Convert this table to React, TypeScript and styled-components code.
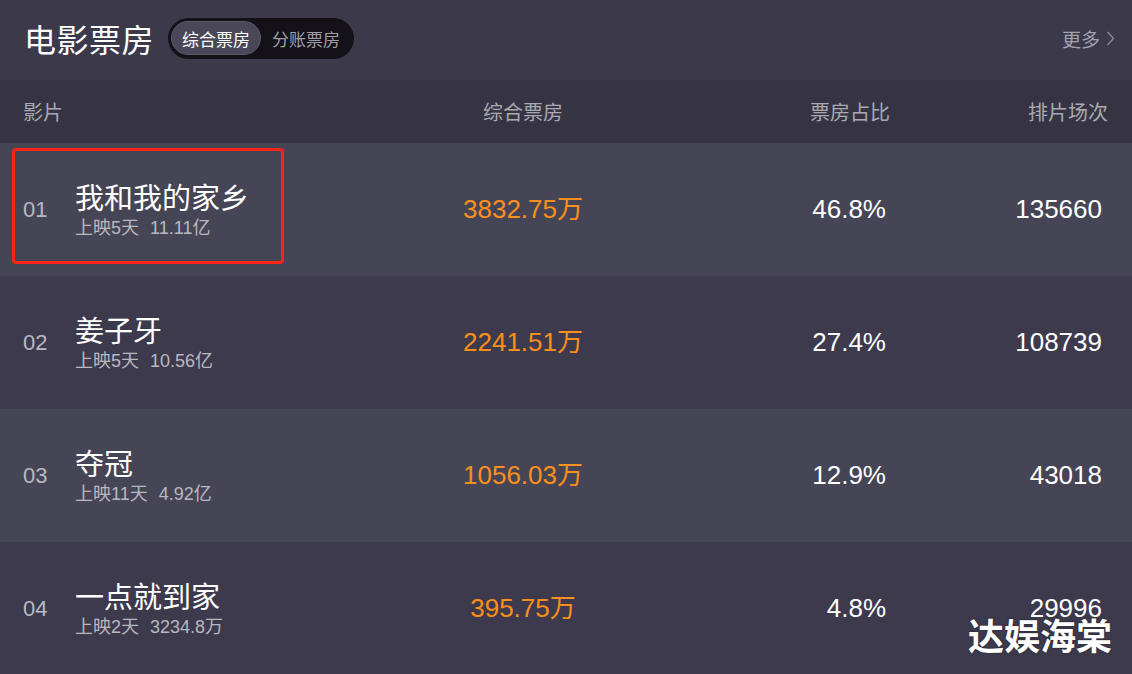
import * as React from 'react';
import styled, { createGlobalStyle } from 'styled-components';

const GlobalStyle = createGlobalStyle`
  html, body {
    margin: 0;
    padding: 0;
    background: #3d3a4d;
  }
  body {
    font-family: "Liberation Sans", "Noto Sans CJK SC", sans-serif;
    overflow: hidden;
  }
`;

interface Movie {
  rank: string,
  name: string,
  days: string,
  total: string,
  boxOffice: string,
  share: string,
  shows: string,
}

const movies: Movie[] = [
  { rank: '01', name: '我和我的家乡', days: '上映5天', total: '11.11亿', boxOffice: '3832.75万', share: '46.8%', shows: '135660' },
  { rank: '02', name: '姜子牙', days: '上映5天', total: '10.56亿', boxOffice: '2241.51万', share: '27.4%', shows: '108739' },
  { rank: '03', name: '夺冠', days: '上映11天', total: '4.92亿', boxOffice: '1056.03万', share: '12.9%', shows: '43018' },
  { rank: '04', name: '一点就到家', days: '上映2天', total: '3234.8万', boxOffice: '395.75万', share: '4.8%', shows: '29996' },
];

const Page = styled.div`
  position: relative;
  width: 1132px;
  height: 674px;
  overflow: hidden;
  background: #3d3a4d;
`;

const TopBar = styled.div`
  display: flex;
  align-items: center;
  height: 80px;
  padding: 0 17px 4px 24px;
  box-sizing: border-box;
  background: #3c3a4a;
`;

const Title = styled.h1`
  margin: 0;
  font-family: "Noto Sans CJK SC", sans-serif;
  font-size: 32px;
  font-weight: 400;
  color: #ffffff;
  letter-spacing: 0.5px;
`;

const Toggle = styled.div`
  display: flex;
  align-items: center;
  margin-left: 14px;
  height: 41px;
  padding: 0 3px;
  box-sizing: border-box;
  border-radius: 21px;
  background: #141218;
`;

const ToggleItem = styled.div<{ $active?: boolean }>`
  display: flex;
  align-items: center;
  justify-content: center;
  width: 90px;
  height: 34px;
  box-sizing: border-box;
  border-radius: 17px;
  font-family: "Noto Sans CJK SC", sans-serif;
  font-size: 17px;
  color: ${(p) => (p.$active ? '#ffffff' : '#a09fa9')};
  background: ${(p) => (p.$active ? '#4a4858' : 'transparent')};
  border: ${(p) => (p.$active ? '1px solid #5a5868' : 'none')};
`;

const More = styled.div`
  margin-left: auto;
  display: flex;
  align-items: center;
  gap: 6px;
  font-family: "Noto Sans CJK SC", sans-serif;
  font-size: 19px;
  color: #a3a2ad;
`;

const HeaderRow = styled.div`
  display: grid;
  grid-template-columns: 400px 246px 244px 1fr;
  align-items: center;
  height: 63px;
  background: #363443;
  font-family: "Noto Sans CJK SC", sans-serif;
  font-size: 20px;
  color: #a9a9b2;
`;

const HeadCell = styled.div<{ $align: 'left' | 'center' | 'right', $pr?: number }>`
  text-align: ${(p) => p.$align};
  padding-left: ${(p) => (p.$align === 'left' ? '23px' : '0')};
  padding-right: ${(p) => `${p.$pr ?? 0}px`};
`;

const Row = styled.div<{ $light: boolean }>`
  position: relative;
  display: grid;
  grid-template-columns: 400px 246px 240px 1fr;
  align-items: center;
  height: 133px;
  background: ${(p) => (p.$light ? '#464556' : '#3d3a4d')};
`;

const FilmCell = styled.div`
  display: flex;
  align-items: center;
  padding-left: 23px;
`;

const Rank = styled.div`
  width: 52px;
  font-size: 22px;
  line-height: 26px;
  color: #b9b9c1;
`;

const FilmInfo = styled.div`
  display: flex;
  flex-direction: column;
`;

const FilmName = styled.div`
  font-family: "Noto Sans CJK SC", sans-serif;
  font-size: 29px;
  line-height: 32px;
  color: #ffffff;
`;

const FilmMeta = styled.div`
  display: flex;
  gap: 11px;
  margin-top: 5px;
  font-size: 18px;
  line-height: 22px;
  color: #b8b8c0;
`;

const Value = styled.div<{ $align: 'center' | 'right', $orange?: boolean, $pr?: number }>`
  text-align: ${(p) => p.$align};
  padding-right: ${(p) => `${p.$pr ?? 0}px`};
  font-size: 26px;
  line-height: 30px;
  padding-bottom: 2px;
  color: ${(p) => (p.$orange ? '#fb8f1c' : '#ffffff')};
`;

const Highlight = styled.div`
  position: absolute;
  left: 12px;
  top: 5px;
  width: 272px;
  height: 116px;
  box-sizing: border-box;
  border: 3px solid #fb2419;
  border-radius: 4px;
`;

const Watermark = styled.div`
  position: absolute;
  right: 20px;
  bottom: 20px;
  font-family: "Noto Sans CJK SC", sans-serif;
  font-size: 36px;
  font-weight: 700;
  line-height: 40px;
  color: #ffffff;
  text-shadow: 0 0 2px rgba(0, 0, 0, 0.5);
`;

function Chevron() {
  return (
    <svg width="9" height="15" viewBox="0 0 9 15">
      <polyline points="1.5,1 7.5,7.5 1.5,14" fill="none" stroke="#8e8c98" strokeWidth="1.3" />
    </svg>
  );
}

function App() {
  return (
    <Page>
      <GlobalStyle />
      <TopBar>
        <Title>电影票房</Title>
        <Toggle>
          <ToggleItem $active>综合票房</ToggleItem>
          <ToggleItem>分账票房</ToggleItem>
        </Toggle>
        <More>
          更多
          <Chevron />
        </More>
      </TopBar>
      <HeaderRow>
        <HeadCell $align="left">影片</HeadCell>
        <HeadCell $align="center">综合票房</HeadCell>
        <HeadCell $align="right">票房占比</HeadCell>
        <HeadCell $align="right" $pr={24}>排片场次</HeadCell>
      </HeaderRow>
      {movies.map((m, i) => (
        <Row key={m.rank} $light={i % 2 === 0}>
          {i === 0 && <Highlight />}
          <FilmCell>
            <Rank>{m.rank}</Rank>
            <FilmInfo>
              <FilmName>{m.name}</FilmName>
              <FilmMeta>
                <span>{m.days}</span>
                <span>{m.total}</span>
              </FilmMeta>
            </FilmInfo>
          </FilmCell>
          <Value $align="center" $orange>{m.boxOffice}</Value>
          <Value $align="right">{m.share}</Value>
          <Value $align="right" $pr={30}>{m.shows}</Value>
        </Row>
      ))}
      <Watermark>达娱海棠</Watermark>
    </Page>
  );
}

export default App;
